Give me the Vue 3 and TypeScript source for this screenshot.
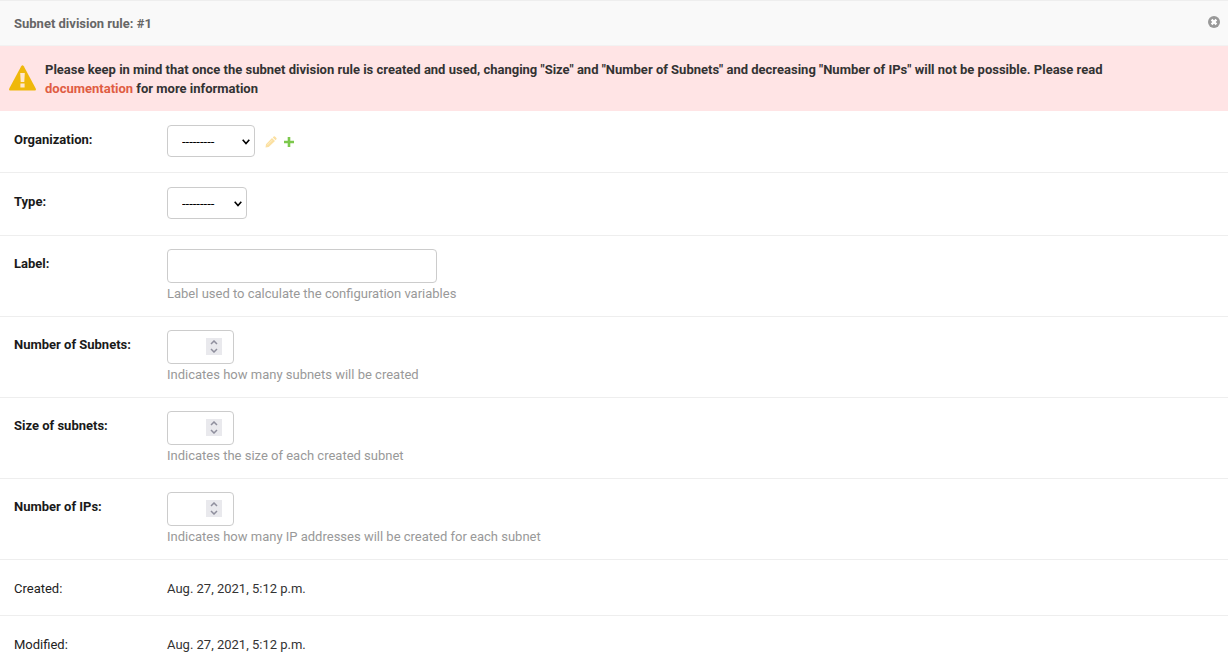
<script setup lang="ts">
import { ref } from 'vue'

interface NumberField {
  id: string
  label: string
  help: string
}

const organization = ref('')
const ruleType = ref('')
const ruleLabel = ref('')
const numbers = ref<Record<string, string>>({})

const numberFields: NumberField[] = [
  { id: 'subnets', label: 'Number of Subnets:', help: 'Indicates how many subnets will be created' },
  { id: 'size', label: 'Size of subnets:', help: 'Indicates the size of each created subnet' },
  { id: 'ips', label: 'Number of IPs:', help: 'Indicates how many IP addresses will be created for each subnet' },
]

const dates = [
  { label: 'Created:', value: 'Aug. 27, 2021, 5:12 p.m.' },
  { label: 'Modified:', value: 'Aug. 27, 2021, 5:12 p.m.' },
]

function step(id: string, delta: number) {
  numbers.value[id] = String(Math.max(0, Number(numbers.value[id] || 0) + delta))
}
</script>

<template>
  <form class="rule" @submit.prevent>
    <header class="head">
      <h3>Subnet division rule: #1</h3>
      <button class="icon-btn" type="button" aria-label="Remove">
        <svg width="12" height="12" viewBox="0 0 12 12">
          <circle cx="6" cy="6" r="6" fill="#999" />
          <path d="M3.6 3.6l4.8 4.8M8.4 3.6L3.6 8.4" stroke="#fff" stroke-width="2.3" />
        </svg>
      </button>
    </header>

    <div class="alert">
      <svg class="warn" width="27" height="28" viewBox="0 0 27 28">
        <path d="M12.2 1.2Q13.5-.8 14.8 1.2L26.6 23.2Q27.6 25.6 25.2 25.6H1.8Q-.6 25.6.4 23.2Z" fill="#efb80b" />
        <path d="M11.2 8h4.6l-.5 9h-3.6zM11.4 18.6h4.2v3.8h-4.2z" fill="#ffe8cf" />
      </svg>
      <p>
        Please keep in mind that once the subnet division rule is created and used, changing "Size" and "Number of
        Subnets" and decreasing "Number of IPs" will not be possible. Please read
        <a href="#">documentation</a> for more information
      </p>
    </div>

    <div class="row related">
      <label for="organization">Organization:</label>
      <div class="control">
        <span class="select wide">
          <select id="organization" v-model="organization"><option value="">---------</option></select>
          <svg class="chevron" width="8" height="6" viewBox="0 0 8 6"><path d="M.7.8L4 4.5 7.3.8" /></svg>
        </span>
        <button class="icon-btn pencil" type="button" aria-label="Change organization" disabled>
          <svg width="12" height="12" viewBox="0 0 12 12">
            <path d="M7 2L10 5 3.7 11 .5 11.5 1 8.3zM7.7 1.4L8.7.6q.7-.5 1.3 0L11.4 2q.6.6 0 1.3l-.8 1z" fill="#fbe0a2" />
            <path d="M2.4 8.9L7.2 4.1" stroke="#fff6df" stroke-width=".6" />
          </svg>
        </button>
        <button class="icon-btn plus" type="button" aria-label="Add organization">
          <svg width="10" height="10" viewBox="0 0 10 10"><path d="M5 0v10M0 5h10" stroke="#7cc84c" stroke-width="2.6" /></svg>
        </button>
      </div>
    </div>

    <div class="row choice">
      <label for="type">Type:</label>
      <div class="control">
        <span class="select">
          <select id="type" v-model="ruleType"><option value="">---------</option></select>
          <svg class="chevron" width="8" height="6" viewBox="0 0 8 6"><path d="M.7.8L4 4.5 7.3.8" /></svg>
        </span>
      </div>
    </div>

    <div class="row field">
      <label for="label">Label:</label>
      <div>
        <input id="label" v-model="ruleLabel" class="text" type="text" aria-describedby="label-help" />
        <p id="label-help" class="help">Label used to calculate the configuration variables</p>
      </div>
    </div>

    <div v-for="f in numberFields" :key="f.id" class="row field">
      <label :for="f.id">{{ f.label }}</label>
      <div>
        <span class="number">
          <input :id="f.id" v-model="numbers[f.id]" type="number" min="0" :aria-describedby="f.id + '-help'" />
          <span class="spin">
            <button type="button" aria-label="Increase" @click="step(f.id, 1)">
              <svg width="8" height="5" viewBox="0 0 8 5"><path d="M1 4l3-3 3 3" /></svg>
            </button>
            <button type="button" aria-label="Decrease" @click="step(f.id, -1)">
              <svg width="8" height="5" viewBox="0 0 8 5"><path d="M1 1l3 3 3-3" /></svg>
            </button>
          </span>
        </span>
        <p :id="f.id + '-help'" class="help">{{ f.help }}</p>
      </div>
    </div>

    <div v-for="d in dates" :key="d.label" class="row date">
      <span class="name">{{ d.label }}</span>
      <span>{{ d.value }}</span>
    </div>
  </form>
</template>

<style>
body {
  background: #fff;
  overflow-x: hidden;
}
</style>

<style scoped>
.rule {
  font: 13px/19px Roboto, "Liberation Sans", sans-serif;
  color: #333;
}
.rule * {
  box-sizing: border-box;
}
h3,
p {
  margin: 0;
}
.head {
  display: flex;
  justify-content: space-between;
  height: 46px;
  padding: 13px 8px 0 14px;
  background: #f9f9f9;
  border-top: 1px solid #eee;
  border-bottom: 1px solid #f2f2f2;
}
h3 {
  font-size: 13px;
  line-height: 19px;
  font-weight: 700;
  color: #666;
}
.icon-btn {
  display: flex;
  padding: 0;
  border: 0;
  background: none;
}
.head .icon-btn {
  height: 12px;
  margin-top: 2px;
}
.alert {
  display: flex;
  align-items: center;
  gap: 9px;
  min-height: 65px;
  padding: 14px 72px 13px 9px;
  background: #ffe4e5;
  font-weight: 700;
}
.warn {
  flex: none;
}
.alert a {
  color: #df5d43;
  text-decoration: none;
}
.row {
  display: grid;
  grid-template-columns: 153px 1fr;
  padding: 14px 14px 0;
  border-bottom: 1px solid #eee;
}
.row label {
  padding-top: 5px;
  font-weight: 700;
  color: #1a1a1a;
}
.name {
  color: #222;
}
.related {
  min-height: 62px;
}
.choice {
  min-height: 63px;
}
.field {
  min-height: 81px;
  padding-top: 13px;
}
.date {
  min-height: 56px;
  padding-top: 19px;
}
.date:last-child {
  min-height: 51px;
  border-bottom: 0;
}
.control {
  display: flex;
  align-items: flex-start;
}
.select {
  position: relative;
  display: flex;
  width: 80px;
}
.select.wide {
  width: 88px;
}
select {
  appearance: none;
  width: 100%;
  height: 32px;
  padding: 0 20px 0 14px;
  border: 1px solid #ccc;
  border-radius: 4px;
  background: #fff;
  color: #000;
  font: 13px/19px Roboto, "Liberation Sans", sans-serif;
}
.chevron {
  position: absolute;
  top: 14px;
  right: 5px;
  pointer-events: none;
}
.chevron path {
  fill: none;
  stroke: #000;
  stroke-width: 1.6;
}
.pencil {
  margin: 11px 0 0 10px;
}
.plus {
  margin: 12px 0 0 7px;
}
.text,
.number input {
  display: block;
  height: 34px;
  padding: 0 14px;
  border: 1px solid #ccc;
  border-radius: 4px;
  background: #fff;
  color: #333;
  font: 13px/19px Roboto, "Liberation Sans", sans-serif;
}
.text {
  width: 270px;
  max-width: 100%;
}
.number {
  position: relative;
  display: block;
  width: 67px;
}
.number input {
  width: 100%;
  padding-right: 28px;
  appearance: textfield;
}
.spin {
  position: absolute;
  top: 8px;
  right: 12px;
  display: flex;
  flex-direction: column;
  width: 16px;
  height: 17px;
  background: #e9e9ed;
}
.spin button {
  display: flex;
  flex: 1;
  align-items: center;
  justify-content: center;
  padding: 0;
  border: 0;
  background: none;
}
.spin path {
  fill: none;
  stroke: #8f8f9d;
  stroke-width: 1.5;
}
.help {
  padding-top: 1px;
  color: #999;
}
</style>
